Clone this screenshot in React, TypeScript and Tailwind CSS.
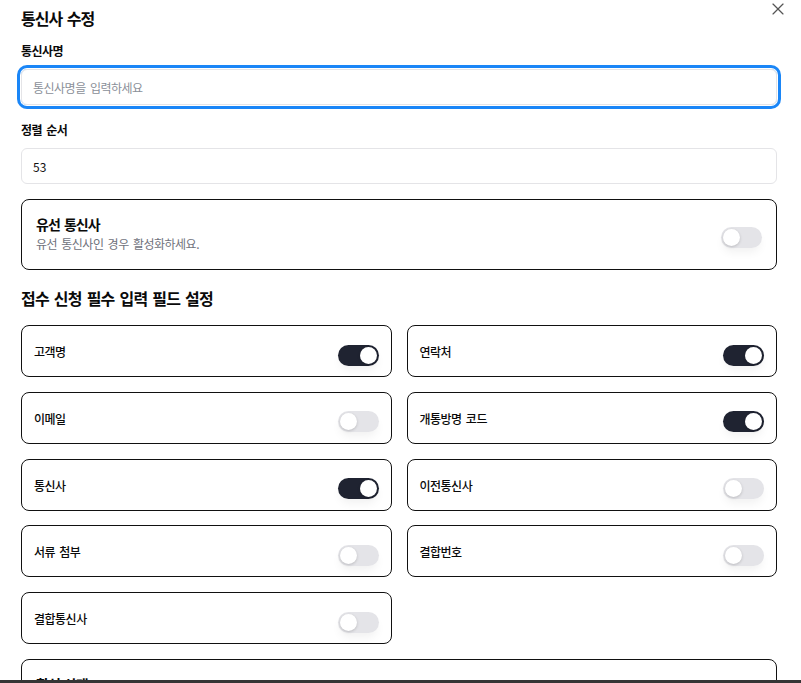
import React, { useState } from 'react';
import { X } from 'lucide-react';

const fields = [
  { key: 'name', label: '고객명', on: true },
  { key: 'phone', label: '연락처', on: true },
  { key: 'email', label: '이메일', on: false },
  { key: 'code', label: '개통방명 코드', on: true },
  { key: 'carrier', label: '통신사', on: true },
  { key: 'prev', label: '이전통신사', on: false },
  { key: 'docs', label: '서류 첨부', on: false },
  { key: 'bundle', label: '결합번호', on: false },
  { key: 'bundleCarrier', label: '결합통신사', on: false },
];

function Toggle({ on, onClick, className = '' }: { on: boolean; onClick: () => void; className?: string }) {
  return (
    <button
      type="button"
      onClick={onClick}
      className={`relative flex h-[21px] w-[41px] shrink-0 items-center rounded-full px-[2px] shadow-[0_6px_10px_-2px_rgba(0,0,0,0.06)] ${on ? 'justify-end bg-[#1f2331]' : 'justify-start bg-[#e4e4e8]'} ${className}`}
    >
      <span className="block h-[17px] w-[17px] rounded-full bg-white shadow-[0_1px_3px_rgba(0,0,0,0.18)]" />
    </button>
  );
}

export default function App() {
  const [values, setValues] = useState<Record<string, boolean>>(
    Object.fromEntries(fields.map((f) => [f.key, f.on]))
  );
  const [wired, setWired] = useState(false);
  const [active, setActive] = useState(true);

  return (
    <div className="flex h-[683px] w-[801px] flex-col overflow-hidden bg-white font-['Noto_Sans_CJK_KR','Noto_Sans',sans-serif] text-[#0a0a0a] [word-spacing:2px]">
      <div className="relative min-h-0 flex-1 overflow-hidden pl-[21px] pr-[24px]">
        <button type="button" className="absolute right-[13px] top-[-1px] text-[#555]">
          <X size={20} strokeWidth={1.4} />
        </button>

        <h2 className="pt-[4px] text-[16px] font-bold leading-7 tracking-[-1px]">통신사 수정</h2>

        <label className="mt-[9px] block text-[12px] font-semibold leading-5 tracking-[-0.5px]">통신사명</label>
        <input
          placeholder="통신사명을 입력하세요"
          className="mt-2 block h-9 w-full rounded-md border border-[#e4e4e7] pl-[11px] text-[12px] tracking-[-0.5px] text-[#111] shadow-[0_0_0_1px_#fff,0_0_0_4px_#1a86f7] outline-none [word-spacing:2px] placeholder:text-[#8a8f98]"
        />

        <label className="mt-[15px] block text-[12px] font-semibold leading-5 tracking-[-0.5px]">정렬 순서</label>
        <input
          defaultValue="53"
          className="mt-2 block h-9 w-full rounded-md border border-[#e4e4e7] pl-[11px] text-[12px] text-[#111] outline-none"
        />

        <div className="mt-[15px] flex h-[71px] items-center justify-between rounded-lg border border-[#111] px-[14px]">
          <div>
            <div className="text-[14px] font-semibold leading-[19px] tracking-[-1px]">유선 통신사</div>
            <div className="text-[12px] leading-5 tracking-[-0.5px] text-[#6f727c]">유선 통신사인 경우 활성화하세요.</div>
          </div>
          <Toggle on={wired} onClick={() => setWired(!wired)} className="mt-[6px]" />
        </div>

        <h3 className="mt-4 text-[16px] font-semibold leading-6 tracking-[-0.75px]">접수 신청 필수 입력 필드 설정</h3>

        <div className="mt-[15px] grid grid-cols-2 gap-x-[15px] gap-y-[14.75px]">
          {fields.map((f) => (
            <div key={f.key} className="flex h-[52px] items-center justify-between rounded-lg border border-[#111] px-3">
              <span className="mt-[2px] text-[12px] font-medium leading-5 tracking-[-0.5px]">{f.label}</span>
              <Toggle
                on={values[f.key]}
                onClick={() => setValues({ ...values, [f.key]: !values[f.key] })}
                className="mt-2"
              />
            </div>
          ))}
        </div>

        <div className="mt-[15px] flex h-[71px] items-center justify-between rounded-lg border border-[#111] px-[14px]">
          <div>
            <div className="text-[14px] font-semibold leading-[19px] tracking-[-1px]">활성 상태</div>
            <div className="text-[12px] leading-5 tracking-[-0.5px] text-[#6f727c]">비활성화 시 목록에 표시되지 않습니다.</div>
          </div>
          <Toggle on={active} onClick={() => setActive(!active)} className="mt-[6px]" />
        </div>
      </div>
      <div className="h-[3px] shrink-0 bg-[#353535]" />
    </div>
  );
}
